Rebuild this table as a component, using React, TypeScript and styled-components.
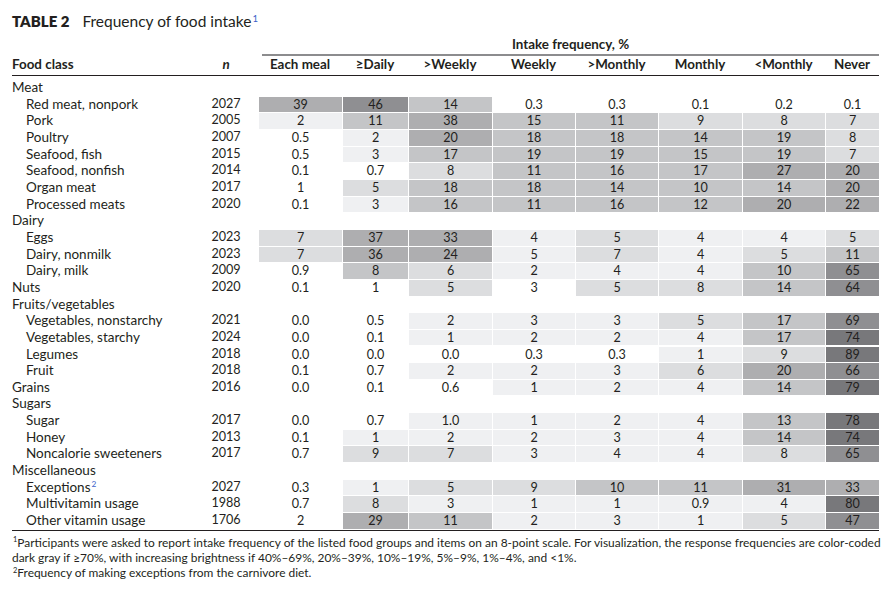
import styled, { createGlobalStyle } from 'styled-components'

const GlobalStyle = createGlobalStyle`
  body {
    margin: 0;
    background: #ffffff;
  }
`;

const INK = '#231f20';

const SHADES = ['#ffffff', '#eff0f2', '#dcdddf', '#c4c5c7', '#aeaeb0', '#8f8f92', '#78787b'];

type Row = {
  group?: boolean;
  label: string;
  n?: number;
  values?: string[];
  note?: string;
};

const rows: Row[] = [
  { group: true, label: 'Meat' },
  { label: 'Red meat, nonpork', n: 2027, values: ['39', '46', '14', '0.3', '0.3', '0.1', '0.2', '0.1'] },
  { label: 'Pork', n: 2005, values: ['2', '11', '38', '15', '11', '9', '8', '7'] },
  { label: 'Poultry', n: 2007, values: ['0.5', '2', '20', '18', '18', '14', '19', '8'] },
  { label: 'Seafood, fish', n: 2015, values: ['0.5', '3', '17', '19', '19', '15', '19', '7'] },
  { label: 'Seafood, nonfish', n: 2014, values: ['0.1', '0.7', '8', '11', '16', '17', '27', '20'] },
  { label: 'Organ meat', n: 2017, values: ['1', '5', '18', '18', '14', '10', '14', '20'] },
  { label: 'Processed meats', n: 2020, values: ['0.1', '3', '16', '11', '16', '12', '20', '22'] },
  { group: true, label: 'Dairy' },
  { label: 'Eggs', n: 2023, values: ['7', '37', '33', '4', '5', '4', '4', '5'] },
  { label: 'Dairy, nonmilk', n: 2023, values: ['7', '36', '24', '5', '7', '4', '5', '11'] },
  { label: 'Dairy, milk', n: 2009, values: ['0.9', '8', '6', '2', '4', '4', '10', '65'] },
  { group: true, label: 'Nuts', n: 2020, values: ['0.1', '1', '5', '3', '5', '8', '14', '64'] },
  { group: true, label: 'Fruits/vegetables' },
  { label: 'Vegetables, nonstarchy', n: 2021, values: ['0.0', '0.5', '2', '3', '3', '5', '17', '69'] },
  { label: 'Vegetables, starchy', n: 2024, values: ['0.0', '0.1', '1', '2', '2', '4', '17', '74'] },
  { label: 'Legumes', n: 2018, values: ['0.0', '0.0', '0.0', '0.3', '0.3', '1', '9', '89'] },
  { label: 'Fruit', n: 2018, values: ['0.1', '0.7', '2', '2', '3', '6', '20', '66'] },
  { group: true, label: 'Grains', n: 2016, values: ['0.0', '0.1', '0.6', '1', '2', '4', '14', '79'] },
  { group: true, label: 'Sugars' },
  { label: 'Sugar', n: 2017, values: ['0.0', '0.7', '1.0', '1', '2', '4', '13', '78'] },
  { label: 'Honey', n: 2013, values: ['0.1', '1', '2', '2', '3', '4', '14', '74'] },
  { label: 'Noncalorie sweeteners', n: 2017, values: ['0.7', '9', '7', '3', '4', '4', '8', '65'] },
  { group: true, label: 'Miscellaneous' },
  { label: 'Exceptions', note: '2', n: 2027, values: ['0.3', '1', '5', '9', '10', '11', '31', '33'] },
  { label: 'Multivitamin usage', n: 1988, values: ['0.7', '8', '3', '1', '1', '0.9', '4', '80'] },
  { label: 'Other vitamin usage', n: 1706, values: ['2', '29', '11', '2', '3', '1', '5', '47'] },
];

const overrides: Record<string, number> = {
  'Organ meat:0': 0,
  'Dairy, nonmilk:3': 1,
  'Dairy, milk:1': 3,
  'Nuts:1': 0,
  'Nuts:3': 0,
  'Multivitamin usage:5': 1,
  'Other vitamin usage:0': 0,
};

const shadeOf = (v: string) => {
  const x = parseFloat(v);
  if (x >= 70) return 6;
  if (x >= 40) return 5;
  if (x >= 20) return 4;
  if (x >= 10) return 3;
  if (x >= 5) return 2;
  if (x >= 1) return 1;
  return 0;
};

const columns = ['Each meal', '\u2265Daily', '>Weekly', 'Weekly', '>Monthly', 'Monthly', '<Monthly', 'Never'];
const widths = [84, 66, 84, 83, 83, 84, 83, 54];

const Page = styled.div`
  width: 888px;
  height: 590px;
  box-sizing: border-box;
  padding: 11px 9px 0 12px;
  font-family: Lato, 'Open Sans', sans-serif;
  color: ${INK};
  overflow: hidden;
`;

const Title = styled.h1`
  margin: 0;
  display: flex;
  align-items: baseline;
  gap: 13px;
  font-size: 15.5px;
  line-height: 20px;
  font-weight: 400;
  b {
    font-weight: 800;
    font-size: 15px;
  }
`;

const Sup = styled.sup<{ $blue?: boolean }>`
  font-size: 0.62em;
  line-height: 0;
  vertical-align: 0.55em;
  color: ${(p) => (p.$blue ? '#3d5fc9' : INK)};
  margin-left: 1px;
`;

const Table = styled.table`
  margin-top: 5px;
  width: 867px;
  table-layout: fixed;
  border-collapse: separate;
  border-spacing: 0;
  font-size: 12.6px;
  border-bottom: 1.7px solid ${INK};
`;

const SpanHead = styled.th`
  padding: 0;
  font-weight: 700;
  font-size: 13.4px;
`;

const SpanRule = styled.div`
  margin-left: 4px;
  line-height: 16px;
  padding-bottom: 2px;
  border-bottom: 2px solid #8c8c8e;
  text-align: center;
`;

const HeadCell = styled.th<{ $align?: string; $italic?: boolean }>`
  padding: 0 0 3px;
  line-height: 16px;
  font-weight: 700;
  font-size: 13.4px;
  white-space: nowrap;
  text-align: ${(p) => p.$align ?? 'center'};
  font-style: ${(p) => (p.$italic ? 'italic' : 'normal')};
  border-bottom: 1.5px solid ${INK};
`;

const BodyRow = styled.tr`
  height: 16.65px;
  &:first-child td {
    padding-top: 3px;
  }
  &:last-child td {
    padding-bottom: 1.3px;
  }
`;

const Label = styled.td<{ $indent: boolean }>`
  padding: 0 0 0 ${(p) => (p.$indent ? 14 : 0)}px;
  font-size: 13.5px;
  line-height: 16.65px;
  white-space: nowrap;
`;

const Count = styled.td`
  padding: 0;
  text-align: center;
  line-height: 16.65px;
`;

const Value = styled.td`
  padding: 0;
  text-align: center;
`;

const Cell = styled.div<{ $shade: number }>`
  height: 15.65px;
  margin: 1px 0 0 1px;
  line-height: 15.65px;
  background: ${(p) => SHADES[p.$shade]};
`;

const Notes = styled.div`
  margin-top: 3.5px;
  font-size: 11.95px;
  line-height: 15.3px;
  span {
    display: block;
    white-space: nowrap;
  }
`;

export default function App() {
  return (
    <Page>
      <GlobalStyle />
      <Title>
        <b>TABLE 2</b>
        <span>
          Frequency of food intake<Sup $blue>1</Sup>
        </span>
      </Title>
      <Table>
        <colgroup>
          <col style={{ width: 188 }} />
          <col style={{ width: 52 }} />
          <col style={{ width: 6 }} />
          {widths.map((w, i) => (
            <col key={i} style={{ width: w }} />
          ))}
        </colgroup>
        <thead>
          <tr>
            <th colSpan={3} />
            <SpanHead colSpan={8}>
              <SpanRule>Intake frequency, %</SpanRule>
            </SpanHead>
          </tr>
          <tr>
            <HeadCell $align="left">Food class</HeadCell>
            <HeadCell $italic>n</HeadCell>
            <HeadCell />
            {columns.map((c) => (
              <HeadCell key={c}>{c}</HeadCell>
            ))}
          </tr>
        </thead>
        <tbody>
          {rows.map((r) => (
            <BodyRow key={r.label}>
              <Label $indent={!r.group}>
                {r.label}
                {r.note && <Sup $blue>{r.note}</Sup>}
              </Label>
              <Count>{r.n ?? ''}</Count>
              <td />
              {columns.map((c, i) => {
                const v = r.values?.[i];
                if (v === undefined) return <td key={c} />;
                const key = `${r.label}:${i}`;
                const shade = key in overrides ? overrides[key] : shadeOf(v);
                return (
                  <Value key={c}>
                    <Cell $shade={shade}>{v}</Cell>
                  </Value>
                );
              })}
            </BodyRow>
          ))}
        </tbody>
      </Table>
      <Notes>
        <span>
          <Sup>1</Sup>Participants were asked to report intake frequency of the listed food groups and items on an 8-point scale. For
          visualization, the response frequencies are color-coded
        </span>
        <span>
          dark gray if {'\u2265'}70%, with increasing brightness if 40%–69%, 20%–39%, 10%–19%, 5%–9%, 1%–4%, and {'<'}1%.
        </span>
        <span>
          <Sup>2</Sup>Frequency of making exceptions from the carnivore diet.
        </span>
      </Notes>
    </Page>
  );
}
